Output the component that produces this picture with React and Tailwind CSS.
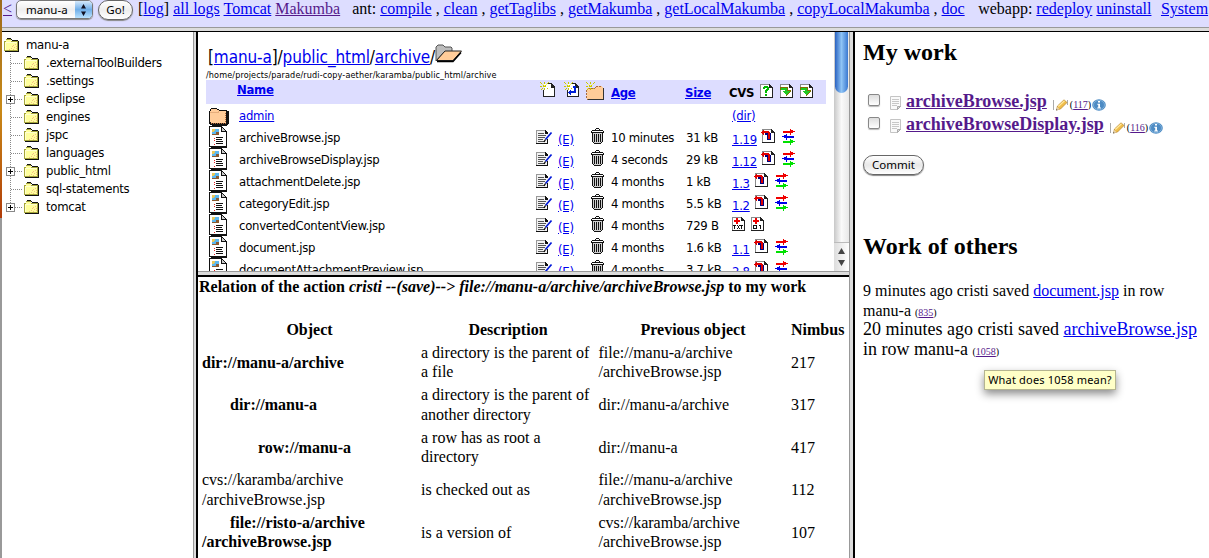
import React from 'react';

const tahoma = "font-['DejaVu_Sans_Condensed','DejaVu_Sans',sans-serif]";
const lucida = "font-['Noto_Sans','Open_Sans',sans-serif]";
const link = 'text-[#0000ee] underline';
const visited = 'text-[#551a8b] underline';

function A({ children, className = link }) {
  return <a className={className}>{children}</a>;
}

function TreeFolder() {
  return (
    <svg className="block shrink-0" width="16" height="14" viewBox="0 0 16 14" shapeRendering="crispEdges">
      <path d="M2 1h5v2h7v10H0V3h2z" fill="#a5a53a" />
      <path d="M2 2h5v2H2zM1 4h12v8H1z" fill="#ffff9c" />
      <path d="M1 4h12v1H2v7H1z" fill="#ffffd0" />
      <path d="M9 7h1v1H9zM11 6h1v1h-1zM12 8h1v1h-1zM10 9h1v1h-1zM7 10h1v1H7zM12 10h1v1h-1zM8 8h1v1H8zM5 11h1v1H5zM9 11h1v1H9z" fill="#f5bc87" />
      <path d="M3 0h4v1H3zM7 1h1v1H7zM8 2h6v1H8zM14 3h1v11H1v-1h13z" fill="#111" />
    </svg>
  );
}

function ClosedFolder() {
  return (
    <svg className="block" width="21" height="18" viewBox="0 0 21 18" shapeRendering="crispEdges">
      <path d="M2 0h6v1h2v1h8v1h2v13h-1v1h-1v1H3v-1H1v-1H0V3h1V1h1z" fill="#111" />
      <path d="M2 1h6v1h2v1h7v12H2v-1H1V3h1z" fill="#ffcc99" />
      <path d="M1 4h8V3h1v2H1z" fill="#e6ae7c" />
      <path d="M2 15.500h15M16.500 5v10" stroke="#b0683a" strokeDasharray="1 1" />
    </svg>
  );
}

function OpenFolder() {
  return (
    <svg className="block" width="28" height="19" viewBox="0 0 28 19">
      <path d="M1 17V3l2-2h5l2 2h6l1 1v4H9z" fill="#bdbdbd" stroke="#555" />
      <path d="M1.500 16.500L10 7h16.500L18 16.500z" fill="#ffcc99" stroke="#222" />
      <path d="M2 17.500h16l8-9" fill="none" stroke="#000" strokeWidth="1.500" />
    </svg>
  );
}

function Doc() {
  return (
    <svg className="block" width="19" height="22" viewBox="0 0 19 22" shapeRendering="crispEdges">
      <path d="M1 0h11l6 6v15H1z" fill="#fff" />
      <path d="M0 0h12v1H1v20H0zM17 6h1v15h-1zM0 20h18v2H2v-1H0zM12 0h1v5h5v1h-6zM13 1h1v1h-1zM14 2h1v1h-1zM15 3h1v1h-1zM16 4h1v1h-1z" fill="#111" />
      <path d="M13 2h1v1h1v1h1v1h-3z" fill="#ccc" />
      <path d="M3 3h7v6H3z" fill="#5cb8f0" />
      <path d="M3 3h3v2H5v1H3z" fill="#e8c85a" />
      <path d="M3 8h7v1H3zM7 6h3v2H7z" fill="#8a5a30" />
      <path d="M5 12h1v1H5zM5 14h1v1H5zM5 18h1v1H5z" fill="#e02020" />
      <path d="M7 11h7v1H7zM7 13h6v1H7zM7 15h7v1H7zM7 17h7v1H7z" fill="#111" />
    </svg>
  );
}

function EditIcon() {
  return (
    <svg className="block" width="17" height="15" viewBox="0 0 17 15" shapeRendering="crispEdges">
      <path d="M0 0h9l3 3v11H0z" fill="#f2f2f2" />
      <path d="M0 0h9v1H1v13H0z" fill="#999" />
      <path d="M9 0h1v1h1v1h1v2H9zM11 9h1v5H0v-1h11z" fill="#111" />
      <path d="M2 3h6v1H2zM2 5h8v1H2zM2 7h7v1H2zM2 9h5v1H2zM2 11h6v1H2z" fill="#555" />
      <path d="M15.500 2.500L9.500 9.500" stroke="#0018d8" strokeWidth="1.700" shapeRendering="auto" />
      <path d="M9.500 9.500L8 12" stroke="#000" strokeWidth="1.300" shapeRendering="auto" />
    </svg>
  );
}

function Trash() {
  return (
    <svg className="block" width="13" height="16" viewBox="0 0 13 16" shapeRendering="crispEdges">
      <path d="M2 5h9v10H2z" fill="#cfcfcf" />
      <path d="M5 0h3v1H5zM4 1h1v1H4zM8 1h1v1H8zM1 2h11v1H1zM0 3h1v1H0zM12 3h1v1h-1zM0 4h13v1H0zM1 5h1v9H1zM11 5h1v9h-1zM2 14h1v1H2zM10 14h1v1h-1zM3 15h7v1H3zM3 6h1v8H3zM5 6h1v8H5zM7 6h1v8H7zM9 6h1v8H9z" fill="#111" />
    </svg>
  );
}

const pageBase = (
  <>
    <path d="M0 0h9l4 4v10H0z" fill="#fff" />
    <path d="M0 0h9v1H1v12H0z" fill="#8a8a8a" />
    <path d="M9 0h1v1h1v1h1v1h1v11H0v-1h12V4H9z" fill="#222" />
  </>
);

function PageIcon({ children }) {
  return (
    <svg className="block" width="13" height="14" viewBox="0 0 13 14" shapeRendering="crispEdges">
      {pageBase}
      {children}
    </svg>
  );
}

function UpdateIcon() {
  return (
    <svg className="block" width="14" height="14" viewBox="0 0 14 14" shapeRendering="crispEdges">
      <g transform="translate(1 0)">{pageBase}</g>
      <path d="M4 3h5v1h1v7H6V6H4z" fill="#000080" />
      <path d="M0 3h1V2h1V1h1v1h5v1h1v7H7V4H3v2H2V5H1V4H0z" fill="#e00000" />
    </svg>
  );
}

function QueryIcon() {
  return (
    <PageIcon>
      <path d="M3 3h1V2h4v1h1v3H8v1H7v2H5V6h1V5h1V4H5v1H3zM5 10h2v2H5z" fill="#00b800" />
    </PageIcon>
  );
}

function DownIcon() {
  return (
    <PageIcon>
      <path d="M1 4h6v3h3v1H9v1H8v1H7v1H6v-1H5V9H4V8H3V7h2V6H1z" fill="#20c820" />
      <path d="M0 3h8v4H7V4H1v2H0zM8 6h3v1H8zM10 7v1H9v1H8v1H7v1H6v1h1v-1h1v-1h1V9h1V8h1V7z" fill="#807000" />
    </PageIcon>
  );
}

function AddIcon({ kind }) {
  return (
    <PageIcon>
      <path d="M4 1h2v2h2v2H6v2H4V5H2V3h2z" fill="#ee0000" />
      {kind === 'txt' ? (
        <path d="M1 8h3v1H3v3H2V9H1zM5 8h1v1h1V8h1v1H7v2h1v1H7v-1H6v1H5v-1h1V9H5zM8 8h3v1h-1v3H9V9H8z" fill="#111" />
      ) : (
        <path d="M2 8h4v4H2zM3 9v2h2V9zM8 8h2v4H9V9H8z" fill="#111" fillRule="evenodd" />
      )}
    </PageIcon>
  );
}

function DiffIcon() {
  return (
    <svg className="block" width="13" height="16" viewBox="0 0 13 16" shapeRendering="crispEdges">
      <path d="M1 2h7V0h1v1h2v1h2v1h-2v1H9v2H8V4H1z" fill="#f00000" />
      <path d="M12 7H5V5H4v1H2v1H0v1h2v1h2v2h1V9h7z" fill="#0000e8" />
      <path d="M1 12h7v-2h1v1h2v1h2v1h-2v1H9v2H8v-2H1z" fill="#00e000" />
    </svg>
  );
}

function Sparkle() {
  return (
    <>
      <path d="M0 0h1v1H0zM1 1h1v1H1zM4 0h1v2H4zM8 0h1v1H8zM7 1h1v1H7zM3 3h3v2H3zM0 4h2v1H0zM1 7h1v1H1zM2 6h1v1H2zM4 6h1v2H4zM7 6h1v1H7z" fill="#c9c900" />
      <path d="M2 2h1v1H2zM6 2h1v1H6zM4 3h1v1H4z" fill="#ffff60" />
    </>
  );
}

function NewFile() {
  return (
    <svg className="block" width="16" height="16" viewBox="0 0 16 16" shapeRendering="crispEdges">
      <path d="M4 2h7l4 4v9H4z" fill="#fff" />
      <path d="M8 1h4v1h1v1h1v1h1v11H3V8h1v6h10V6h-3V2H8z" fill="#222" />
      <Sparkle />
    </svg>
  );
}

function NewUpload() {
  return (
    <svg className="block" width="16" height="16" viewBox="0 0 16 16" shapeRendering="crispEdges">
      <path d="M4 2h7l4 4v9H4z" fill="#fff" />
      <path d="M8 1h4v1h1v1h1v1h1v11H3V8h1v6h10V6h-3V2H8z" fill="#222" />
      <path d="M9 4h3v7H7v2H6v-1H5v-1H4v-1h1V9h1V8h1v1h3V6H9z" fill="#0020d8" />
      <Sparkle />
    </svg>
  );
}

function NewFolder() {
  return (
    <svg className="block" width="19" height="19" viewBox="0 0 19 19" shapeRendering="crispEdges">
      <path d="M1 6h8V5h1V4h6v1h1v13H1z" fill="#ffcc99" />
      <path d="M9 5.500h1M10 4.500h6M1 17.500h16M.5 8v9M2 6.500h7" stroke="#a86b3c" strokeDasharray="2 1" />
      <path d="M2 18h16V6h-1v11H2z" fill="#333" />
      <Sparkle />
    </svg>
  );
}

function NoteIcon() {
  return (
    <svg className="block" width="12" height="14" viewBox="0 0 12 14">
      <path d="M.5.5h10v10l-3 3h-7z" fill="#fafafa" stroke="#c4c4c4" />
      <path d="M2 3.500h7M2 5.500h7M2 7.500h7M2 9.500h5" stroke="#c8c8c8" />
      <path d="M7.500 13.500v-3h3z" fill="#ddd" stroke="#aaa" />
    </svg>
  );
}

function Pencil() {
  return (
    <svg className="block" width="15" height="12" viewBox="0 0 15 12">
      <path d="M.5 1v10M14.500 1v5" stroke="#aaa" />
      <path d="M3.500 11l1-4L11 .8l3 2.700L7.500 10z" fill="#f0bd4a" stroke="#b58328" strokeWidth=".7" />
      <path d="M5.300 7.500L11.500 1.700" stroke="#ffe9a0" strokeWidth="1.200" />
      <path d="M3.200 11.200l1-3.200 2.500 2.300z" fill="#e6d2ac" />
      <path d="M3 11.400l.5-1.500 1 1z" fill="#444" />
    </svg>
  );
}

function Info() {
  return (
    <svg className="block" width="14" height="12" viewBox="0 0 14 12">
      <ellipse cx="7" cy="6" rx="6.800" ry="5.800" fill="#4d8bc4" />
      <ellipse cx="7" cy="6" rx="5.500" ry="4.700" fill="none" stroke="#8fbbe0" strokeWidth=".7" />
      <path d="M6 2h2v1.500H6zM5.300 4.800H8v3.700h1v1H5.200v-1h1V5.800h-.9z" fill="#fff" />
    </svg>
  );
}

const antTargets = ['compile', 'clean', 'getTaglibs', 'getMakumba', 'getLocalMakumba', 'copyLocalMakumba', 'doc'];

function TopBar() {
  return (
    <header className="flex h-[27px] shrink-0 items-start overflow-hidden bg-[#ddddff] pl-px text-[16px] leading-[18px] whitespace-pre">
      <A className={visited}>&lt;</A>
      <div className={`ml-1 flex h-[19px] w-[77px] items-center overflow-hidden rounded-[5px] border border-[#777] bg-gradient-to-b from-white via-[#eee] to-white pl-[9px] text-[11.5px] shadow-[0_1px_1px_#888] ${lucida}`}>
        <span className="grow">manu-a</span>
        <span className="flex h-full w-[17px] items-center justify-center bg-gradient-to-b from-[#d5e9fb] via-[#6faee8] to-[#b8e2ff]">
          <svg width="7" height="12" viewBox="0 0 7 12"><path d="M3.500 0L6 4.500H1zM3.500 12L6 7.500H1z" fill="#112" /></svg>
        </span>
      </div>
      <div className={`mr-[5px] ml-[5px] flex h-[20px] w-[35px] items-center justify-center rounded-full border border-[#666] bg-gradient-to-b from-white via-[#eee] to-white text-[11.5px] shadow-[0_1px_1px_#888] ${lucida}`}>Go!</div>
      <div>
        [<A>log</A>] <A>all logs</A> <A>Tomcat</A> <A className={visited}>Makumba</A>{'   '}ant:{' '}
        {antTargets.map((t, i) => (
          <React.Fragment key={t}>{i > 0 && ' , '}<A>{t}</A></React.Fragment>
        ))}
        <span className="pl-[13.500px]">webapp: </span><A>redeploy</A> <A>uninstall</A><span className="pl-[9.500px]" /><A>System</A>
      </div>
    </header>
  );
}

const folders = [
  ['.externalToolBuilders', false], ['.settings', false], ['eclipse', true], ['engines', false], ['jspc', false],
  ['languages', false], ['public_html', true], ['sql-statements', false], ['tomcat', true],
];

function Tree() {
  return (
    <nav className={`flex w-[191px] shrink-0 flex-col bg-white pt-[4px] text-[13px] leading-[18px] tracking-[-0.28px] ${tahoma}`}>
      <div className="flex h-[18px] items-center pl-[2px]"><TreeFolder /><span className="pl-[6px]">manu-a</span></div>
      {folders.map(([name, plus], i) => (
        <div key={name} className="flex h-[18px] items-center pl-[4px]">
          <svg className="block shrink-0" width="16" height="18" viewBox="0 0 16 18" shapeRendering="crispEdges">
            <path d={i === folders.length - 1 ? 'M4.500 0v9' : 'M4.500 0v18'} stroke="#888" strokeDasharray="1 1" />
            <path d="M5 9.500h11" stroke="#888" strokeDasharray="1 1" />
            {plus && <><path d="M.5 5.500h8v8h-8z" fill="#fff" stroke="#888" /><path d="M2 9h5v1H2zM4 7h1v5H4z" fill="#000" /></>}
          </svg>
          <span className="ml-[2px]"><TreeFolder /></span>
          <span className="pl-[6px] whitespace-nowrap">{name}</span>
        </div>
      ))}
    </nav>
  );
}

const files = [
  ['archiveBrowse.jsp', '10 minutes', '31 kB', '1.19'],
  ['archiveBrowseDisplay.jsp', '4 seconds', '29 kB', '1.12'],
  ['attachmentDelete.jsp', '4 months', '1 kB', '1.3'],
  ['categoryEdit.jsp', '4 months', '5.5 kB', '1.2'],
  ['convertedContentView.jsp', '4 months', '729 B', ''],
  ['document.jsp', '4 months', '1.6 kB', '1.1'],
  ['documentAttachmentPreview.jsp', '4 months', '3.7 kB', '2.8'],
];
const cols = 'grid grid-cols-[33px_297px_22px_33px_20px_75px_46px_1fr]';

function FileBrowser() {
  return (
    <section className="flex h-[239px] shrink-0 bg-white">
      <div className={`flex grow flex-col overflow-hidden pl-[8px] text-[13px] tracking-[-0.28px] whitespace-nowrap ${tahoma}`}>
        <div className="flex h-[37px] shrink-0 items-end pl-[2px] text-[17px] leading-[24px] tracking-[-0.12px]">
          <span>[<A>manu-a</A>]/<A>public_html</A>/<A>archive</A>/</span>
          <span className="mb-[6px]"><OpenFolder /></span>
        </div>
        <div className="h-[11px] shrink-0 text-[9px] leading-[12px] tracking-[0.12px]">/home/projects/parade/rudi-copy-aether/karamba/public_html/archive</div>
        <div className="grid h-[24px] w-[620px] shrink-0 grid-cols-[31px_303px_24px_22px_25px_74px_44px_1fr] bg-[#ddddff] font-bold leading-[26px]">
          <span />
          <span className="leading-[20px]"><A>Name</A></span>
          <span className="pt-[2px]"><NewFile /></span><span className="pt-[2px]"><NewUpload /></span><span className="pt-[2px]"><NewFolder /></span>
          <A>Age</A><A>Size</A>
          <span className="flex"><span className="w-[31px]">CVS</span><span className="flex gap-[7px] pt-[4px]"><QueryIcon /><DownIcon /><DownIcon /></span></span>
        </div>
        <div className={`${cols} h-[22px] shrink-0 leading-[24px]`}>
          <span className="pt-[4px] pl-[3px]"><ClosedFolder /></span><span><A>admin</A></span>
          <span /><span /><span /><span /><span /><span><A>(dir)</A></span>
        </div>
        {files.map(([name, age, size, ver]) => (
          <div key={name} className={`${cols} h-[22px] shrink-0 leading-[23px]`}>
            <span className="pl-[3px]"><Doc /></span>
            <span>{name}</span>
            <span className="pt-[4px]"><EditIcon /></span>
            <span className="pt-[2px]"><A>(E)</A></span>
            <span className="pt-[2px]"><Trash /></span>
            <span>{age}</span>
            <span>{size}</span>
            {ver ? (
              <span className="flex"><span className="pt-[2px]"><A>{ver}</A></span><span className="flex gap-[7px] pt-[3px] pl-[4px]"><UpdateIcon /><DiffIcon /></span></span>
            ) : (
              <span className="flex gap-[6px] pt-[3px]"><AddIcon kind="txt" /><AddIcon kind="bin" /></span>
            )}
          </div>
        ))}
      </div>
      <div className="flex w-[15px] shrink-0 flex-col items-center bg-gradient-to-r from-[#c8c8c8] via-[#fafafa] to-[#e8e8e8]">
        <div className="h-[61px] w-[13px] rounded-b-full bg-gradient-to-r from-[#2b62c0] via-[#8fc4f5] to-[#3a78d0]" />
        <div className="grow" />
        <div className="flex h-[29px] w-full items-center justify-center border-t border-[#bbb] bg-gradient-to-r from-[#ddd] to-white">
          <svg width="7" height="18" viewBox="0 0 7 18"><path d="M3.500 0L7 6H0zM3.500 18L7 12H0z" fill="#444" /></svg>
        </div>
      </div>
    </section>
  );
}

const relations = [
  [<b>dir://manu-a/archive</b>, <>a directory is the parent of<br />a file</>, <>file://manu-a/archive<br />/archiveBrowse.jsp</>, '217'],
  [<b className="pl-[28px]">dir://manu-a</b>, <>a directory is the parent of<br />another directory</>, 'dir://manu-a/archive', '317'],
  [<b className="pl-[56px]">row://manu-a</b>, <>a row has as root a<br />directory</>, 'dir://manu-a', '417'],
  [<>cvs://karamba/archive<br />/archiveBrowse.jsp</>, 'is checked out as', <>file://manu-a/archive<br />/archiveBrowse.jsp</>, '112'],
  [<b><span className="pl-[28px]">file://risto-a/archive</span><br />/archiveBrowse.jsp</b>, 'is a version of', <>cvs://karamba/archive<br />/archiveBrowse.jsp</>, '107'],
];
const relCols = 'grid grid-cols-[219px_177.5px_192.5px_1fr] items-center whitespace-nowrap';

function Relations() {
  return (
    <section className="grow overflow-hidden bg-white text-[16px] leading-[19.5px]">
      <h3 className="h-[41px] pl-px font-bold tracking-[-0.01px] whitespace-nowrap">Relation of the action <i>cristi --(save)--&gt; file://manu-a/archive/archiveBrowse.jsp</i> to my work</h3>
      <div className="pl-[4px]">
        <div className={`${relCols} h-[23px] font-bold`}>
          <span className="w-[215px] text-center">Object</span><span className="w-[174px] text-center">Description</span><span className="w-[189px] text-center">Previous object</span><span>Nimbus</span>
        </div>
        {relations.map((r, i) => (
          <div key={i} className={`${relCols} h-[42.5px]`}>
            <div>{r[0]}</div><div>{r[1]}</div><div>{r[2]}</div><div>{r[3]}</div>
          </div>
        ))}
      </div>
    </section>
  );
}

function WorkItem({ name, nimbus }) {
  return (
    <div className="flex h-[23px] items-center">
      <span className="mr-[10px] mb-[6px] ml-[5px] h-[12px] w-[12px] rounded-[2px] border border-[#888] bg-gradient-to-b from-[#ddd] to-white shadow-[0_1px_1px_#bbb]" />
      <span><NoteIcon /></span>
      <span className="ml-[4px] pb-px text-[18px] font-bold"><A className={visited}>{name}</A></span>
      <span className="flex items-center pt-[4px] pl-[6px] text-[10px] leading-[12px]">
        <Pencil /><span className="pl-[2px]">(<A className={visited}>{nimbus}</A>)</span><span className="pl-px"><Info /></span>
      </span>
    </div>
  );
}

function WorkPanel() {
  return (
    <aside className="relative grow bg-white pl-[8px] leading-[19.5px] whitespace-nowrap">
      <h2 className="h-[59px] pt-[6px] text-[24px] leading-[28px] font-bold">My work</h2>
      <WorkItem name="archiveBrowse.jsp" nimbus="117" />
      <WorkItem name="archiveBrowseDisplay.jsp" nimbus="116" />
      <div className={`mt-[18px] flex h-[20px] w-[61px] items-center justify-center rounded-full border border-[#666] bg-gradient-to-b from-white via-[#e8e8e8] to-white text-[11.5px] shadow-[0_1px_1px_#888] ${lucida}`}>Commit</div>
      <h2 className="mt-[57px] h-[49px] text-[24px] leading-[28px] font-bold">Work of others</h2>
      <p className="text-[16px]">9 minutes ago cristi saved <A>document.jsp</A> in row<br />manu-a <span className="text-[10px] leading-[0]">(<A className={visited}>835</A>)</span></p>
      <p className="text-[18px]">20 minutes ago cristi saved <A>archiveBrowse.jsp</A><br />in row manu-a <span className="text-[10px] leading-[0]">(<A className={visited}>1058</A>)</span></p>
      <div className={`absolute top-[338px] left-[129px] flex h-[20px] w-[132px] items-center justify-center border border-[#b5b590] bg-[#ffffc7] text-[11px] tracking-[0.18px] shadow-[0_4px_8px_rgba(0,0,0,0.45)] ${lucida}`}>What does 1058 mean?</div>
    </aside>
  );
}

function VerticalSplit() {
  return <div className="w-[6px] shrink-0 border-r-2 border-l border-r-black border-l-[#999] bg-[#dcdcdc]" />;
}

export default function App() {
  return (
    <div className="flex h-[558px] w-[1209px] overflow-hidden bg-white font-['Liberation_Serif',serif] text-black">
      <div className="flex w-[2px] shrink-0 flex-col bg-[#999]">
        <div className="h-[218px] bg-gradient-to-b from-[#9c6a1c] via-[#c98a18] to-[#b03a08]" />
      </div>
      <div className="flex min-w-0 grow flex-col">
        <TopBar />
        <div className="h-[5px] shrink-0 border-t border-b-[1.500px] border-t-[#999] border-b-black bg-[#dcdcdc]" />
        <div className="flex min-h-0 grow">
          <Tree />
          <div className="w-[5px] shrink-0 border-r-2 border-l border-r-black border-l-[#999] bg-[#dcdcdc]" />
          <main className="flex w-[651px] shrink-0 flex-col">
            <FileBrowser />
            <div className="h-[6px] shrink-0 border-t border-b-2 border-t-[#999] border-b-black bg-[#dcdcdc]" />
            <Relations />
          </main>
          <VerticalSplit />
          <WorkPanel />
        </div>
      </div>
    </div>
  );
}
